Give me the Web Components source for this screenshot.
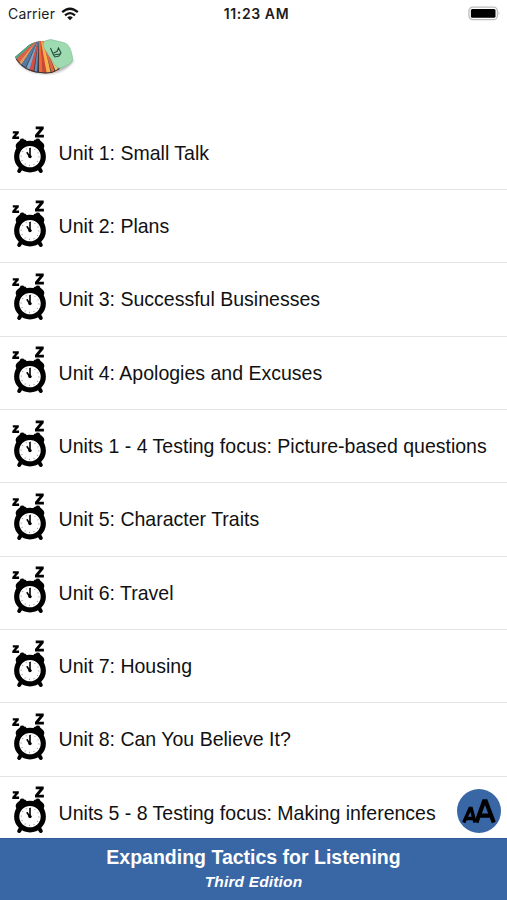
<!DOCTYPE html>
<html lang="en">
<head>
<meta charset="utf-8">
<title>Expanding Tactics for Listening</title>
<style>
html,body{margin:0;height:100%;background:#fff}
body{font-family:"Liberation Sans",Arial,sans-serif;color:#111;overflow:hidden}
</style>
</head>
<body>
<tactics-app></tactics-app>
<script>
const define = (name, html) => customElements.define(name, class extends HTMLElement {
  constructor() {
    super();
    const t = document.createElement('template');
    t.innerHTML = html;
    this.attachShadow({mode: 'open'}).append(t.content.cloneNode(true));
  }
});

define('status-bar', `
<style>
:host{display:grid;grid-template-columns:1fr auto 1fr;align-items:center;height:27px;padding:0 6px 0 8px;box-sizing:border-box;font:14px/27px Inter,sans-serif;color:#1c1c1c}
.left{display:flex;align-items:center;gap:6px;letter-spacing:.18px}
.time{font-weight:600;font-size:14px;letter-spacing:.6px;padding-left:4px}
.battery{justify-self:end}
svg{display:block}
</style>
<div class="left"><span>Carrier</span>
<svg width="18" height="14" viewBox="0 0 18 14" fill="none" stroke="#111" stroke-width="2.3"><path d="M1.2 5.2Q9-1.8 16.8 5.2M4 8.3Q9 3.9 14 8.3"/><path d="M6.2 10.4Q9 8.2 11.8 10.4L9 13.2Z" fill="#111" stroke="none"/></svg></div>
<span class="time">11:23 AM</span>
<svg class="battery" width="33" height="16" viewBox="0 0 33 16"><rect x=".9" y="1.1" width="28.5" height="12.6" rx="4" fill="#fff" stroke="#bcbcbc" stroke-width="1.3"/><rect x="2.9" y="3.1" width="24.6" height="8.6" rx="1.5" fill="#000"/><path d="M30.7 5.3Q32.4 7.4 30.7 9.5Z" fill="#aaa"/></svg>`);

define('card-fan', `
<style>:host{display:block;height:89.6px}svg{display:block}</style>
<svg width="90" height="60" viewBox="0 27 90 60">
<defs><filter id="s" x="-20%" y="-20%" width="140%" height="150%"><feGaussianBlur stdDeviation="1"/></filter>
<clipPath id="c"><path d="M44 41Q35 41 29 45L15 57Q18 64 26 69Q33 73 44 73Q52 74 60 69L50 41Z"/></clipPath></defs>
<path d="M17 62Q27 74 44 74Q63 75 74 61L66 52Z" fill="#777" opacity=".5" filter="url(#s)"/>
<g clip-path="url(#c)">
<path d="M14 40H60V74H14Z" fill="#4b3838"/>
<path d="M39 38L8 56L15 62Z" fill="#4baa83"/>
<path d="M39 38L15 60L19 65Z" fill="#d9604a"/>
<path d="M39 38L18 64L20 67Z" fill="#e59a59"/>
<path d="M39 38L20 67L24 71Z" fill="#4f7ba5"/>
<path d="M39 38L25 71L29 73Z" fill="#7da5cd"/>
<path d="M39 37L29 72L33 74Z" fill="#d94d43"/>
<path d="M39 36L34 75L37 75Z" fill="#5f8fbd"/>
<path d="M39 34L39 75L43 75L41 38Z" fill="#ee6937"/>
<path d="M40 36L43 75L47 75L42 38Z" fill="#cf4535"/>
<path d="M40 36L47 75L51 74L43 38Z" fill="#f6b04c"/>
<path d="M42 40L52 74L55 72L44 40Z" fill="#dd6543"/>
<path d="M43 40L56 72L59 71L45 40Z" fill="#f0c572"/>
</g>
<path d="M16 59Q25 72 44 73Q52 74 59 69" fill="none" stroke="#3a3030" stroke-width="1"/>
<path d="M45 41Q50 38 57 41L65 43Q70 45 72 55Q74 60 70 64L61 68Q57 69 55 65L44 48Q42 43 45 41Z" fill="#9edbb1" stroke="#85bd9a" stroke-width=".7"/>
<path d="M50.5 48L53.5 55L55 57L59 56L61 53L58.5 48L57 51.5L53.5 53M53.5 55L60 54" fill="none" stroke="#284b40" stroke-width="1.1"/>
</svg>`);

define('snooze-icon', `
<style>:host{display:block;width:58.6px;height:73px;flex:none}svg{display:block}</style>
<svg width="59" height="73" viewBox="0 0 59 73">
<path d="M12.8 15.2H18.8V17.3L15.7 20.6H19.1V23H12.3V20.9L15.3 17.6H12.8Z"/>
<path d="M35.7 10.6H43.7V13L38.9 18.8H43.9V21.4H35V19L39.7 13.3H35.7Z"/>
<path d="M16.5 32.5Q14.6 29.5 17 27L19.8 24.5L20.6 22.8L23.3 22.5L24 23.4Q27 23.5 27.5 28ZM43.5 32.5Q45.4 29.5 43 27L40.2 24.5L39.4 22.8L36.7 22.5L36 23.4Q33 23.5 32.5 28Z"/>
<path d="M21 52L19.2 55M39 52L40.8 55" stroke="#000" stroke-width="4" stroke-linecap="round"/>
<circle cx="30" cy="40.6" r="13.3" fill="#fff" stroke="#000" stroke-width="5.2"/>
<circle cx="30" cy="40.6" r="8.8" fill="none" stroke="#888" stroke-width="1.2" stroke-dasharray=".8 3.81"/>
<path d="M30 41V32M30 41L26.8 36.3" stroke="#000" stroke-width="1.6"/><circle cx="30" cy="40.6" r="1.7"/>
</svg>`);

define('unit-row', `
<style>
:host{display:flex;align-items:center;height:73.33px;box-sizing:border-box;border-bottom:1.5px solid #e4e4e4;font-size:19.53px;white-space:nowrap}
span{line-height:24px}
</style><snooze-icon></snooze-icon><span><slot></slot></span>`);

define('text-size', `
<style>:host{display:block;width:44px;height:44px}svg{display:block}</style>
<svg width="44" height="44" viewBox="0 0 44 44"><circle cx="22" cy="22" r="22" fill="#3966a4"/>
<g fill="none" stroke="#000"><path d="M6.7 33.5L13 19.5H14.2L18 33.5M9.3 29.5H17" stroke-width="3.4"/><path d="M19.4 33.5L27 12.3H28.8L36.8 33.5M22.5 26.7H34" stroke-width="4.2"/></g></svg>`);

define('title-bar', `
<style>
:host{display:block;height:62.5px;box-sizing:border-box;background:#3966a4;border-top:1px solid #315b96;color:#fff;text-align:center;font-weight:700;padding-top:6px}
div{font-size:19.5px;line-height:24px}
p{margin:0;font-size:15.5px;letter-spacing:.15px;line-height:25px;font-style:italic}
</style><div><slot></slot></div><p><slot name="edition"></slot></p>`);

define('tactics-app', `
<style>
:host{display:flex;flex-direction:column;height:900px;width:507px;position:relative;overflow:hidden}
main{flex:1;min-height:0;overflow:hidden}
text-size{position:absolute;right:6px;bottom:67px}
</style>
<status-bar></status-bar><card-fan></card-fan>
<main>
<unit-row>Unit 1: Small Talk</unit-row><unit-row>Unit 2: Plans</unit-row>
<unit-row>Unit 3: Successful Businesses</unit-row><unit-row>Unit 4: Apologies and Excuses</unit-row>
<unit-row>Units 1 - 4 Testing focus: Picture-based questions</unit-row>
<unit-row>Unit 5: Character Traits</unit-row><unit-row>Unit 6: Travel</unit-row>
<unit-row>Unit 7: Housing</unit-row><unit-row>Unit 8: Can You Believe It?</unit-row>
<unit-row>Units 5 - 8 Testing focus: Making inferences</unit-row>
</main>
<text-size></text-size>
<title-bar>Expanding Tactics for Listening<span slot="edition">Third Edition</span></title-bar>`);
</script>
</body>
</html>
